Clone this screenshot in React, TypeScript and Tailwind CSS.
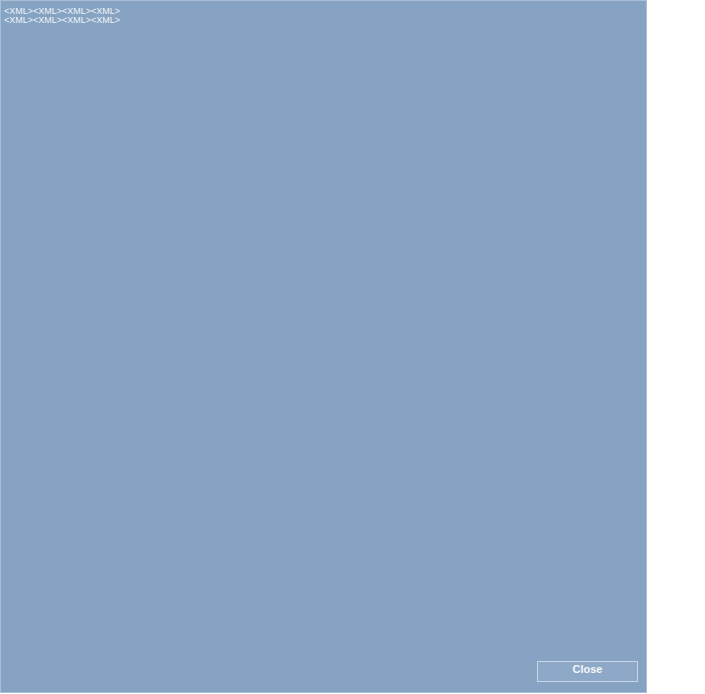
export default function App() {
  return (
    <div className="w-[705px] h-[694px] bg-white" style={{ fontFamily: '"Liberation Sans", Arial, sans-serif' }}>
      <div className="w-[647px] h-[693px] bg-[#86a3c3] border border-[#a9bdd4] flex flex-col">
        <div className="pt-[6px] pl-[3px] text-[9px] leading-[9px] text-[#eef3f8]">
          <div>&lt;XML&gt;&lt;XML&gt;&lt;XML&gt;&lt;XML&gt;</div>
          <div>&lt;XML&gt;&lt;XML&gt;&lt;XML&gt;&lt;XML&gt;</div>
        </div>
        <div className="flex-1" />
        <div className="flex justify-end pr-[8px] pb-[10px]">
          <button className="w-[101px] h-[21px] border border-[#c9d6e5] bg-[#8ea9c7] text-[11px] font-bold text-[#f2f6fa] leading-none pb-[5px]">
            Close
          </button>
        </div>
      </div>
    </div>
  );
}
